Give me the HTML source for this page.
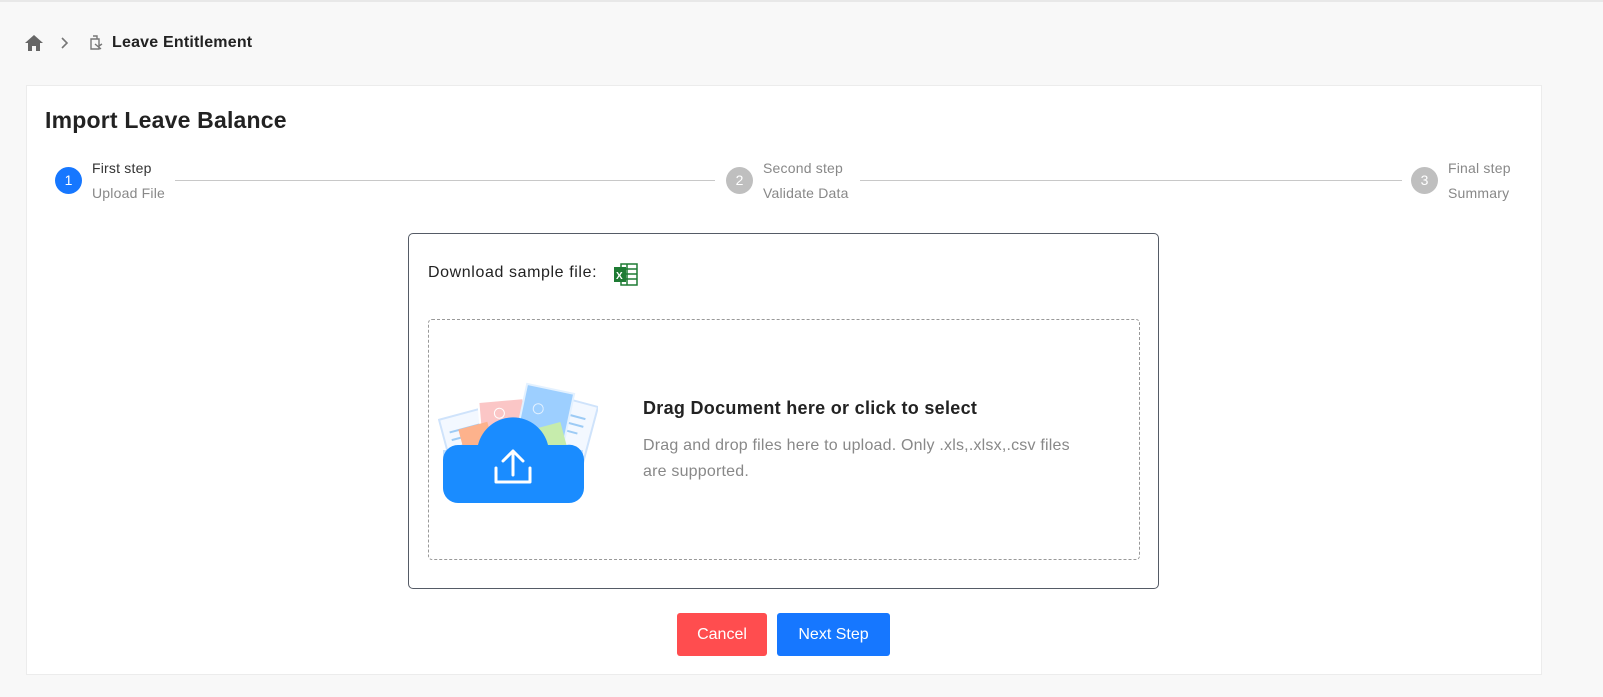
<!DOCTYPE html>
<html><head><style>
body{margin:0;width:1603px;height:697px;background:#f8f8f8;font-family:"Liberation Sans",sans-serif;position:relative;overflow:hidden;color:#222}
.top{position:absolute;left:0;top:0;width:1603px;height:2px;background:#e8e8e8}
.card{position:absolute;left:26px;top:85px;width:1514px;height:588px;background:#fff;border:1px solid #ececec}
.a{position:absolute;white-space:nowrap}
.circ{position:absolute;width:27px;height:27px;border-radius:50%;color:#fff;font-size:14px;text-align:center;line-height:27px}
.line{position:absolute;height:1px;background:#c8c8c8;top:180px}
.lbl{font-size:14px;color:#333;letter-spacing:.2px}
.sub{font-size:14px;color:#888;letter-spacing:.2px}
</style></head><body>
<div class="top"></div>
<svg class="a" style="left:24px;top:34px" width="20" height="18" viewBox="0 0 20 18"><path d="M10 1L1 9h3v8h4v-5h4v5h4V9h3z" fill="#666"/></svg>
<svg class="a" style="left:60px;top:36px" width="10" height="14" viewBox="0 0 10 14"><path d="M2 2l5 5-5 5" stroke="#777" stroke-width="1.6" fill="none"/></svg>
<svg class="a" style="left:88px;top:34px" width="16" height="18" viewBox="0 0 16 18"><path d="M5 2h4v3M3 5h8v10H3zM7 10l6 5M11 12l3-2" stroke="#777" stroke-width="1.4" fill="none"/></svg>
<div class="a" style="left:112px;top:34px;font-size:16px;font-weight:bold;color:#222;letter-spacing:.2px">Leave Entitlement</div>
<div class="card"></div>
<div class="a" style="left:45px;top:107px;font-size:23px;font-weight:bold;color:#222;letter-spacing:.2px">Import Leave Balance</div>
<div class="circ" style="left:55px;top:167px;background:#1677ff">1</div>
<div class="a lbl" style="left:92px;top:160px">First step</div>
<div class="a sub" style="left:92px;top:185px">Upload File</div>
<div class="line" style="left:175px;width:540px"></div>
<div class="circ" style="left:726px;top:167px;background:#bfbfbf">2</div>
<div class="a sub" style="left:763px;top:160px">Second step</div>
<div class="a sub" style="left:763px;top:185px">Validate Data</div>
<div class="line" style="left:860px;width:542px"></div>
<div class="circ" style="left:1411px;top:167px;background:#bfbfbf">3</div>
<div class="a sub" style="left:1448px;top:160px">Final step</div>
<div class="a sub" style="left:1448px;top:185px">Summary</div>
<div class="a" style="left:408px;top:233px;width:749px;height:354px;border:1px solid #555b66;border-radius:5px"></div>
<div class="a" style="left:428px;top:264px;font-size:16px;color:#222;letter-spacing:.6px">Download sample file:</div>
<svg class="a" style="left:613px;top:263px" width="25" height="23" viewBox="0 0 25 23"><rect x="8" y="1" width="16" height="21" fill="#fff" stroke="#1e7b34" stroke-width="1.5"/><path d="M14 1v21M8 6h16M8 11h16M8 16h16" stroke="#1e7b34" stroke-width="1.5"/><rect x="1" y="4" width="12" height="15" fill="#1e7b34"/><text x="3" y="16" font-size="10" font-weight="bold" fill="#fff" font-family="Liberation Sans">X</text></svg>
<div class="a" style="left:428px;top:319px;width:710px;height:239px;border:1px dashed #999;border-radius:4px"></div>
<svg class="a" style="left:438px;top:380px" width="160" height="126" viewBox="0 0 160 126">
<g transform="rotate(-15 40 50)"><rect x="5" y="30" width="50" height="60" fill="#f3f8ff" stroke="#cfe3fb" stroke-width="2"/><path d="M12 45h34M12 53h34M12 61h30" stroke="#9dcbf5" stroke-width="2"/></g>
<g transform="rotate(15 130 50)"><rect x="105" y="20" width="48" height="62" fill="#f3f8ff" stroke="#cfe3fb" stroke-width="2"/><path d="M112 35h32M112 43h32M112 51h28" stroke="#9dcbf5" stroke-width="2"/></g>
<g transform="rotate(-5 65 40)"><rect x="42" y="20" width="45" height="45" fill="#fbc6c6" stroke="#fff" stroke-width="2"/><circle cx="62" cy="33" r="5" fill="none" stroke="#fff"/></g>
<g transform="rotate(12 105 40)"><rect x="82" y="8" width="48" height="60" fill="#9dcfff" stroke="#e3f1ff" stroke-width="2"/><circle cx="98" cy="30" r="5" fill="none" stroke="#e3f1ff"/></g>
<rect x="25" y="45" width="30" height="40" fill="#fdb28c" transform="rotate(-15 40 65)"/>
<rect x="100" y="45" width="28" height="40" fill="#c6ecac" transform="rotate(-15 114 65)"/>
<path d="M5 70h140v40H5z" fill="#a9d3ff" opacity=".7"/>
<path d="M20 123a15 15 0 0 1-15-15v-28a15 15 0 0 1 15-15h20a36 36 0 0 1 70 0h18a15 15 0 0 1 18 15v28a15 15 0 0 1-15 15z" fill="#1a8cff"/>
<path d="M75 71v24M65 81l10-10 10 10M58 88v14h34V88" stroke="#fff" stroke-width="3" fill="none" stroke-linejoin="round" stroke-linecap="round"/>
</svg>
<div class="a" style="left:643px;top:398px;font-size:18px;font-weight:bold;color:#222;letter-spacing:.3px">Drag Document here or click to select</div>
<div class="a" style="left:643px;top:433px;font-size:16px;color:#888;line-height:26px;white-space:normal;width:455px;letter-spacing:.2px">Drag and drop files here to upload. Only .xls,.xlsx,.csv files are supported.</div>
<div class="a" style="left:677px;top:613px;width:90px;height:43px;background:#ff4d4f;border-radius:3px;color:#fff;font-size:16px;text-align:center;line-height:43px">Cancel</div>
<div class="a" style="left:777px;top:613px;width:113px;height:43px;background:#1677ff;border-radius:3px;color:#fff;font-size:16px;text-align:center;line-height:43px">Next Step</div>
</body></html>
